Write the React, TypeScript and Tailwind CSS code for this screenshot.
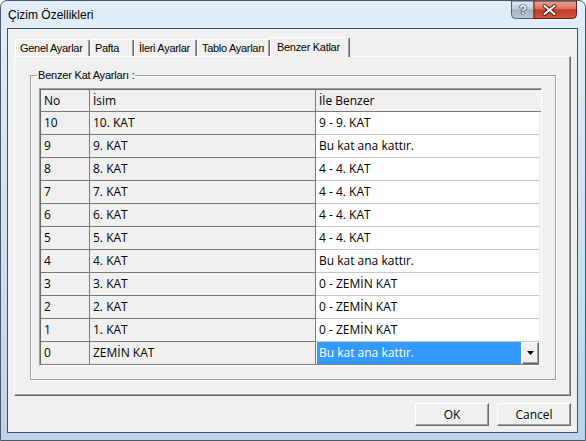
import React from 'react';

const rows: [string, string, string][] = [
  ['10', '10. KAT', '9 - 9. KAT'],
  ['9', '9. KAT', 'Bu kat ana kattır.'],
  ['8', '8. KAT', '4 - 4. KAT'],
  ['7', '7. KAT', '4 - 4. KAT'],
  ['6', '6. KAT', '4 - 4. KAT'],
  ['5', '5. KAT', '4 - 4. KAT'],
  ['4', '4. KAT', 'Bu kat ana kattır.'],
  ['3', '3. KAT', '0 - ZEMİN KAT'],
  ['2', '2. KAT', '0 - ZEMİN KAT'],
  ['1', '1. KAT', '0 - ZEMİN KAT'],
  ['0', 'ZEMİN KAT', 'Bu kat ana kattır.'],
];

const tabs = [
  { label: 'Genel Ayarlar', w: 'w-[75px]' },
  { label: 'Pafta', w: 'w-[44px]' },
  { label: 'İleri Ayarlar', w: 'w-[63px]' },
  { label: 'Tablo Ayarları', w: 'w-[73px]' },
];

// Aero caption buttons, drawn as one small graphic
function TitleButtons() {
  return (
    <div className="relative ml-auto mr-[8px] h-[18px] w-[66px]">
      <svg width="66" height="18" viewBox="0 0 66 18" className="block">
        <defs>
          <linearGradient id="helpG" x1="0" y1="0" x2="0" y2="1">
            <stop offset="0" stopColor="#e2e8ef" />
            <stop offset="0.45" stopColor="#c2cedb" />
            <stop offset="0.5" stopColor="#a3b3c6" />
            <stop offset="1" stopColor="#b9c7d6" />
          </linearGradient>
          <linearGradient id="closeG" x1="0" y1="0" x2="0" y2="1">
            <stop offset="0" stopColor="#e9a394" />
            <stop offset="0.45" stopColor="#d9725f" />
            <stop offset="0.5" stopColor="#c23b25" />
            <stop offset="1" stopColor="#d0563d" />
          </linearGradient>
        </defs>
        <path d="M0.5 0 V13.5 Q0.5 17.5 4.5 17.5 H23 V0 Z" fill="url(#helpG)" stroke="#4f5f73" />
        <path d="M23 0 V17.5 H61.5 Q65.5 17.5 65.5 13.5 V0 Z" fill="url(#closeG)" stroke="#5e251c" />
        <path d="M28.5 5 L38.5 13 M38.5 5 L28.5 13" stroke="#4f170f" strokeWidth="4" strokeLinecap="round" transform="translate(5 0)" />
        <path d="M28.5 5 L38.5 13 M38.5 5 L28.5 13" stroke="#ffffff" strokeWidth="2.2" strokeLinecap="round" transform="translate(5 0)" />
      </svg>
      <span className="absolute left-[8px] top-[2px] text-[13px] font-bold leading-none text-white [font-family:'Liberation_Sans',sans-serif] [text-shadow:0_0_1px_#1f2b3d,0_0_1px_#1f2b3d,0_0_1px_#1f2b3d,0_0_1px_#1f2b3d]">
        ?
      </span>
    </div>
  );
}

function Tabs() {
  return (
    <div className="flex h-[19px] items-end pl-[1px] text-[11px] tracking-[-0.3px] text-black [font-family:'Liberation_Sans',sans-serif]">
      {tabs.map((t) => (
        <div
          key={t.label}
          className={`${t.w} flex h-[17px] items-center rounded-t-[2px] border-l border-t border-r border-l-white border-t-white border-r-[#696969] pl-[4px] shadow-[inset_-1px_0_0_#a0a0a0] whitespace-nowrap`}
        >
          {t.label}
        </div>
      ))}
      <div className="relative z-10 -mb-px flex h-[20px] w-[80px] items-center rounded-t-[2px] border-l border-t border-r border-l-white border-t-white border-r-[#696969] bg-[#f0f0f0] pl-[6px] shadow-[inset_-1px_0_0_#a0a0a0] whitespace-nowrap">
        Benzer Katlar
      </div>
    </div>
  );
}

function Grid() {
  return (
    <div className="ml-[8px] mt-[12px] w-[503px] border border-t-[#a0a0a0] border-l-[#a0a0a0] border-b-white border-r-white shadow-[inset_1px_1px_0_#696969]">
      <div className="flex flex-col pl-[1px] pt-[1px] text-[12px] text-black [font-family:'Open_Sans','Liberation_Sans',sans-serif]">
        <div className="flex h-[22px] border-b border-[#7a7a7a]">
          <div className="flex w-[49px] items-center border-r border-[#7a7a7a] pl-[3px]">No</div>
          <div className="flex w-[226px] items-center border-r border-[#7a7a7a] pl-[3px]">İsim</div>
          <div className="flex w-[223px] items-center pl-[3px]">İle Benzer</div>
        </div>
        {rows.map(([no, name, like], i) => {
          const last = i === rows.length - 1;
          return (
            <div key={no} className="flex h-[23px]">
              <div className="flex w-[49px] items-center border-b border-r border-[#7a7a7a] pl-[3px]">{no}</div>
              <div className="flex w-[226px] items-center border-b border-r border-[#7a7a7a] pl-[3px]">{name}</div>
              {last ? (
                <div className="flex w-[223px] border-b border-[#7a7a7a] bg-white">
                  <div className="flex flex-1 items-center border-l border-white bg-[#3399ff] pl-[2px] text-white">
                    {like}
                  </div>
                  <div className="ml-px flex w-[17px] items-center justify-center border border-t-white border-l-white border-b-[#696969] border-r-[#696969] bg-[#f0f0f0] shadow-[inset_-1px_-1px_0_#a0a0a0]">
                    <svg width="7" height="4" viewBox="0 0 7 4">
                      <path d="M0 0 H7 L3.5 4 Z" fill="#000" />
                    </svg>
                  </div>
                </div>
              ) : (
                <div className="flex w-[223px] items-center border-b border-[#c8c8c8] bg-white pl-[3px]">{like}</div>
              )}
            </div>
          );
        })}
      </div>
    </div>
  );
}

function DialogButton({ children }: { children: React.ReactNode }) {
  return (
    <div className="flex h-[23px] w-[74px] items-center justify-center border border-t-white border-l-white border-b-[#696969] border-r-[#696969] bg-[#f0f0f0] text-[12px] text-black shadow-[inset_-1px_-1px_0_#a0a0a0] [font-family:'Open_Sans','Liberation_Sans',sans-serif]">
      {children}
    </div>
  );
}

export default function App() {
  return (
    <div className="flex h-[441px] w-[586px] flex-col overflow-hidden rounded-t-[7px] border border-[#4a5a6b] bg-[#cfe0f2] bg-linear-to-b from-[#e3eef9] to-[#bcd3ec]">
      <div className="flex h-[27px] items-start">
        <div className="pl-[7px] pt-[6px] text-[12px] leading-[16px] text-black [font-family:'Liberation_Sans',sans-serif]">
          Çizim Özellikleri
        </div>
        <TitleButtons />
      </div>

      <div className="ml-[6px] flex h-[405px] w-[571px] flex-col border border-[#3f5368] bg-[#f0f0f0] pl-[6px] pr-[6px] pt-[8px]">
        <Tabs />
        <div className="h-[340px] w-[557px] border border-t-white border-l-white border-b-[#696969] border-r-[#696969] shadow-[inset_-1px_-1px_0_#a0a0a0]">
          <div className="relative ml-[15px] mt-[18px] h-[305px] w-[526px] border border-[#a0a0a0] shadow-[1px_1px_0_#fff,inset_1px_1px_0_#fff]">
            <div className="absolute -top-[8px] left-[6px] bg-[#f0f0f0] px-[1px] text-[11px] leading-[14px] tracking-[-0.2px] text-black [font-family:'Liberation_Sans',sans-serif]">
              Benzer Kat Ayarları :
            </div>
            <Grid />
          </div>
        </div>
        <div className="mt-[7px] flex justify-end gap-[8px]">
          <DialogButton>OK</DialogButton>
          <DialogButton>Cancel</DialogButton>
        </div>
      </div>
    </div>
  );
}
